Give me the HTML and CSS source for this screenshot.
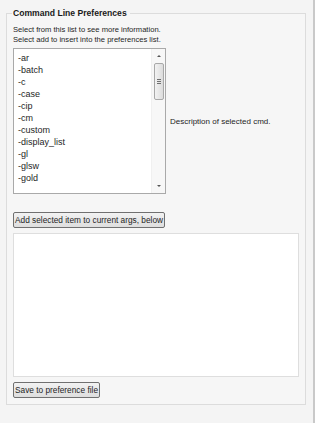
FILE: index.html
```html
<!DOCTYPE html>
<html lang="en">
<head>
  <meta charset="UTF-8">
  <title>Command Line Preferences</title>
  <link rel="stylesheet" href="styles.css">
</head>
<body>
  <div class="window">
    <fieldset class="group">
      <legend>Command Line Preferences</legend>
      <p class="hint">Select from this list to see more information.<br>Select add to insert into the preferences list.</p>

      <div class="pick-row">
        <div class="listbox">
          <ul class="items">
            <li>-ar</li>
            <li>-batch</li>
            <li>-c</li>
            <li>-case</li>
            <li>-cip</li>
            <li>-cm</li>
            <li>-custom</li>
            <li>-display_list</li>
            <li>-gl</li>
            <li>-glsw</li>
            <li>-gold</li>
          </ul>
          <div class="vscroll">
            <span class="arrow up"></span>
            <span class="thumb"><i></i><i></i><i></i></span>
            <span class="arrow down"></span>
          </div>
        </div>
        <div class="desc">Description of selected cmd.</div>
      </div>

      <button class="btn btn-add">Add selected item to current args, below</button>
      <div class="args"></div>
      <button class="btn btn-save">Save to preference file</button>
    </fieldset>
  </div>
</body>
</html>
```

FILE: styles.css
```css
body {
  margin: 0;
  background-color: #f4f4f4;
  font-family: "Liberation Sans", Arial, sans-serif;
  font-size: 8px;
  color: #1e1e1e;
}
.window {
  width: 315px;
  height: 423px;
  border-right: 2px solid #c9c9c9;
  box-sizing: border-box;
  padding: 8px 7px 0 6px;
}
.group {
  margin: 0;
  height: 397px;
  box-sizing: border-box;
  border: 1px solid #dcdcdc;
  padding: 0 6px 0 6px;
  background-color: #f6f6f6;
}
.group legend {
  font-weight: bold;
  font-size: 8.6px;
  line-height: 10px;
  padding: 0 3px 0 1px;
  margin-left: -1px;
  color: #1a1a1a;
}
.hint {
  margin: 7px 0 3px;
  font-size: 7.6px;
  line-height: 10px;
}
.pick-row {
  display: flex;
  align-items: center;
  gap: 4px;
}
.listbox {
  width: 153px;
  height: 146px;
  box-sizing: border-box;
  border: 1px solid #a9a9a9;
  background-color: white;
  display: flex;
}
.items {
  flex: 1;
  list-style: none;
  margin: 0;
  padding: 3px 0 0 4px;
  font-size: 9px;
  line-height: 12px;
}
.vscroll {
  width: 13px;
  display: flex;
  flex-direction: column;
  align-items: center;
  background-color: #f7f7f7;
  border-left: 1px solid #f0f0f0;
}
.arrow {
  width: 0;
  height: 0;
  border-left: 2px solid transparent;
  border-right: 2px solid transparent;
  margin: 6px 0;
}
.arrow.up {
  border-bottom: 2px solid #555;
}
.arrow.down {
  border-top: 2px solid #555;
  margin-top: auto;
}
.thumb {
  width: 10px;
  height: 37px;
  box-sizing: border-box;
  border: 1px solid #a8a8a8;
  border-radius: 2px;
  background: linear-gradient(to right, #f2f2f2, #dcdcdc);
  display: flex;
  flex-direction: column;
  align-items: center;
  justify-content: center;
  gap: 1px;
}
.thumb i {
  width: 4px;
  height: 1px;
  background-color: #707070;
}
.desc {
  font-size: 8px;
}
.btn {
  display: block;
  font-family: inherit;
  font-size: 8.3px;
  color: #1e1e1e;
  padding: 0 1px;
  height: 16px;
  border: 1px solid #707070;
  border-radius: 2px;
  background: linear-gradient(#f2f2f2, #dedede);
}
.btn-add {
  margin-top: 18px;
}
.args {
  margin-top: 5px;
  width: 286px;
  height: 144px;
  box-sizing: border-box;
  border: 1px solid #dedede;
  background-color: white;
}
.btn-save {
  margin-top: 5px;
}
```
